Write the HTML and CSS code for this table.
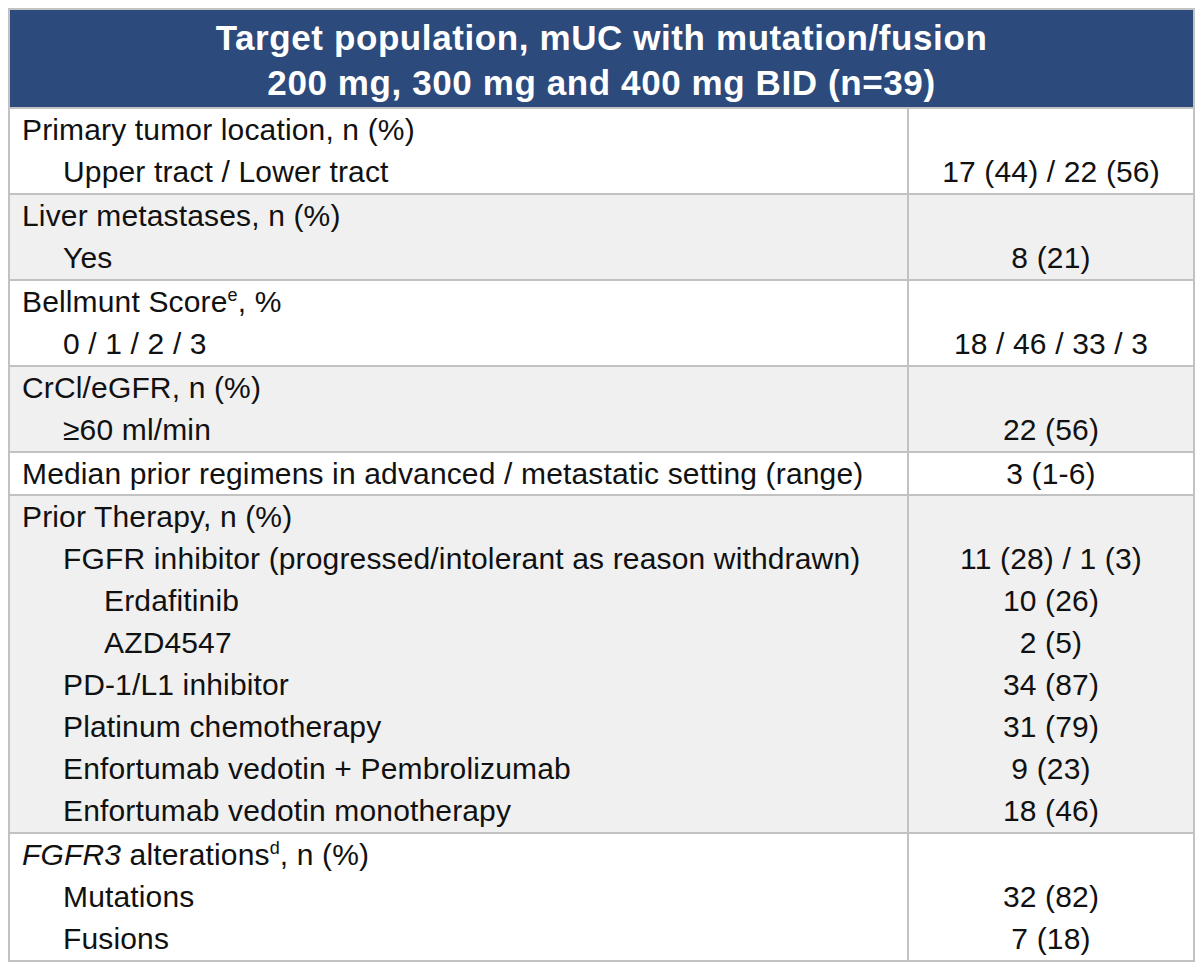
FILE: index.html
```html
<!DOCTYPE html>
<html>
<head>
<meta charset="utf-8">
<link rel="stylesheet" href="styles.css">
</head>
<body>
<table class="tbl">
  <colgroup><col class="c1"><col class="c2"></colgroup>
  <thead>
    <tr><th colspan="2" class="head">Target population, mUC with mutation/fusion<br>200 mg, 300 mg and 400 mg BID (n=39)</th></tr>
  </thead>
  <tbody class="grp">
    <tr><td class="lbl">Primary tumor location, n (%)</td><td class="val"></td></tr>
    <tr><td class="lbl i1">Upper tract / Lower tract</td><td class="val">17 (44) / 22 (56)</td></tr>
  </tbody>
  <tbody class="grp alt">
    <tr><td class="lbl">Liver metastases, n (%)</td><td class="val"></td></tr>
    <tr><td class="lbl i1">Yes</td><td class="val">8 (21)</td></tr>
  </tbody>
  <tbody class="grp">
    <tr><td class="lbl">Bellmunt Score<sup>e</sup>, %</td><td class="val"></td></tr>
    <tr><td class="lbl i1">0 / 1 / 2 / 3</td><td class="val">18 / 46 / 33 / 3</td></tr>
  </tbody>
  <tbody class="grp alt">
    <tr><td class="lbl">CrCl/eGFR, n (%)</td><td class="val"></td></tr>
    <tr><td class="lbl i1">≥60 ml/min</td><td class="val">22 (56)</td></tr>
  </tbody>
  <tbody class="grp">
    <tr class="short"><td class="lbl">Median prior regimens in advanced / metastatic setting (range)</td><td class="val">3 (1-6)</td></tr>
  </tbody>
  <tbody class="grp alt">
    <tr><td class="lbl">Prior Therapy, n (%)</td><td class="val"></td></tr>
    <tr><td class="lbl i1">FGFR inhibitor (progressed/intolerant as reason withdrawn)</td><td class="val">11 (28) / 1 (3)</td></tr>
    <tr><td class="lbl i2">Erdafitinib</td><td class="val">10 (26)</td></tr>
    <tr><td class="lbl i2">AZD4547</td><td class="val">2 (5)</td></tr>
    <tr><td class="lbl i1">PD-1/L1 inhibitor</td><td class="val">34 (87)</td></tr>
    <tr><td class="lbl i1">Platinum chemotherapy</td><td class="val">31 (79)</td></tr>
    <tr><td class="lbl i1">Enfortumab vedotin + Pembrolizumab</td><td class="val">9 (23)</td></tr>
    <tr><td class="lbl i1">Enfortumab vedotin monotherapy</td><td class="val">18 (46)</td></tr>
  </tbody>
  <tbody class="grp">
    <tr><td class="lbl"><em>FGFR3</em> alterations<sup>d</sup>, n (%)</td><td class="val"></td></tr>
    <tr><td class="lbl i1">Mutations</td><td class="val">32 (82)</td></tr>
    <tr><td class="lbl i1">Fusions</td><td class="val">7 (18)</td></tr>
  </tbody>
</table>
</body>
</html>
```
FILE: styles.css
```css
html, body {
  margin: 0;
  padding: 0;
  background: #ffffff;
}
body {
  padding: 8px;
  font-family: "Liberation Sans", Arial, sans-serif;
  color: #111111;
}
.tbl {
  border-collapse: collapse;
  width: 1185px;
  table-layout: fixed;
  border: 2px solid #c2c2c2;
}
.c1 { width: 899px; }
.c2 { width: 286px; }
.head {
  background: #2c4a7b;
  color: #ffffff;
  font-weight: bold;
  font-size: 35px;
  letter-spacing: 0.6px;
  line-height: 45px;
  padding: 5px 0 2px;
  text-align: center;
  border-bottom: 0;
}
.grp {
  border-top: 2px solid #c2c2c2;
}
.alt {
  background: #f0f0f0;
}
td {
  font-size: 30px;
  letter-spacing: 0.15px;
  line-height: 42px;
  height: 42px;
  padding: 0;
  white-space: nowrap;
}
.short td {
  line-height: 41px;
  height: 41px;
}
.lbl {
  padding-left: 12px;
  text-align: left;
}
.lbl.i1 { padding-left: 53px; }
.lbl.i2 { padding-left: 94px; }
.val {
  text-align: center;
  border-left: 2px solid #c2c2c2;
}
sup {
  font-size: 18px;
  line-height: 0;
  vertical-align: 11px;
}
em { font-style: italic; }
```
